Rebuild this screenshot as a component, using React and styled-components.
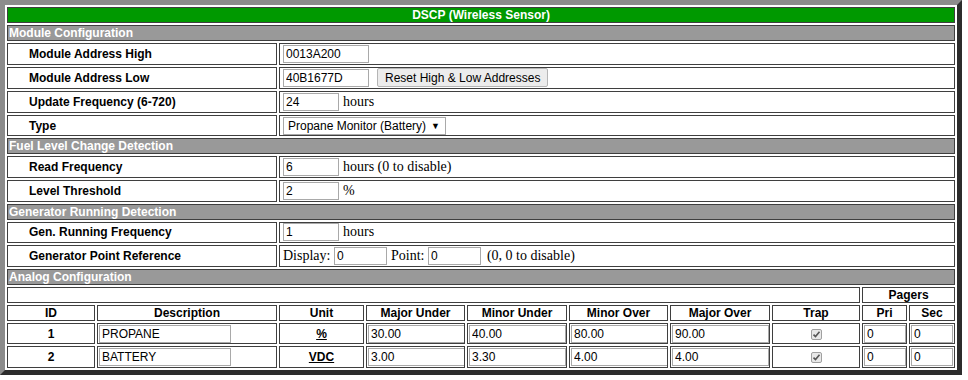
import React from "react";
import styled, { createGlobalStyle } from "styled-components";

const GlobalStyle = createGlobalStyle`
  body {
    margin: 0;
    background: #ffffff;
    font-family: "Liberation Serif", "Times New Roman", serif;
  }
`;

const Table = styled.table`
  width: 962px;
  table-layout: fixed;
  border-collapse: separate;
  border-spacing: 2px;
  border: 5px solid;
  border-color: #8c8c8c #2c2c2c #2c2c2c #8c8c8c;
  font-family: "Liberation Sans", Arial, sans-serif;
  font-size: 12px;
  color: #000;
`;

const Cell = styled.td`
  border: 1px solid #3f3f3f;
  padding: 0.8px 3px;
  vertical-align: middle;
  white-space: nowrap;
  overflow: hidden;
  height: 18px;
  box-sizing: content-box;
`;

const HeaderBase = styled(Cell)`
  font-weight: bold;
  height: 14px;
  padding: 0 2px;
  line-height: 14px;
`;

const TitleCell = styled(HeaderBase)`
  background: #009900;
  color: #fff;
  text-align: center;
`;

const SectionCell = styled(HeaderBase)`
  background: #999999;
  color: #fff;
  padding: 0 1px;
`;

const HeadCell = styled(HeaderBase)`
  text-align: center;
`;

const LabelCell = styled(Cell)`
  font-weight: bold;
  padding-left: 21px;
`;

const ValueCell = styled(Cell)`
  font-family: "Liberation Serif", "Times New Roman", serif;
  font-size: 14px;
`;

const DataCell = styled(Cell)`
  padding-left: 1px;
  padding-right: 1px;
  text-align: ${(p) => (p.$center ? "center" : "left")};
  font-weight: ${(p) => (p.$bold ? "bold" : "normal")};
`;

const Input = styled.input`
  box-sizing: border-box;
  width: ${(p) => p.$w || "86px"};
  height: 18px;
  border: 1px solid #a9a9a9;
  padding: 0 2px;
  margin: 0 4px 0 0;
  font-family: "Liberation Sans", Arial, sans-serif;
  font-size: 12px;
  color: #000;
  vertical-align: middle;
  background: #fff;
`;

const Button = styled.button`
  height: 19px;
  padding: 0 7px;
  margin-left: 4px;
  border: 1px solid #b5b5b5;
  border-radius: 2px;
  background: #ececec;
  font-family: "Liberation Sans", Arial, sans-serif;
  font-size: 12px;
  color: #000;
  vertical-align: middle;
`;

const Select = styled.span`
  display: inline-flex;
  align-items: center;
  gap: 5px;
  box-sizing: border-box;
  height: 18px;
  padding: 0 5px 0 4px;
  border: 1px solid #a9a9a9;
  font-family: "Liberation Sans", Arial, sans-serif;
  font-size: 12px;
  vertical-align: middle;
  background: #fff;
`;

const Arrow = styled.span`
  font-size: 9px;
`;

const Note = styled.span`
  vertical-align: middle;
  margin-left: ${(p) => p.$ml || "0"};
`;

const UnitLink = styled.a`
  color: #000;
  font-weight: bold;
  text-decoration: underline;
`;

function Check() {
  return (
    <svg width="11" height="11" viewBox="0 0 11 11" style={{ verticalAlign: "middle" }}>
      <rect x="0.5" y="0.5" width="10" height="10" rx="1.5" fill="#e8e8e8" stroke="#a0a0a0" />
      <path d="M2.5 5.6 L4.5 7.6 L8.5 2.8" fill="none" stroke="#555" strokeWidth="1.6" />
    </svg>
  );
}

const cols = [88, 180, 85, 99, 100, 99, 100, 88, 45, 46];

function SettingRow({ label, children }) {
  return (
    <tr>
      <LabelCell colSpan={2}>{label}</LabelCell>
      <ValueCell colSpan={8}>{children}</ValueCell>
    </tr>
  );
}

function Section({ title }) {
  return (
    <tr>
      <SectionCell colSpan={10}>{title}</SectionCell>
    </tr>
  );
}

const analog = [
  { id: 1, desc: "PROPANE", unit: "%", vals: ["30.00", "40.00", "80.00", "90.00"] },
  { id: 2, desc: "BATTERY", unit: "VDC", vals: ["3.00", "3.30", "4.00", "4.00"] },
];

export default function App() {
  return (
    <>
      <GlobalStyle />
      <Table>
        <colgroup>
          {cols.map((w, i) => (
            <col key={i} style={{ width: w }} />
          ))}
        </colgroup>
        <tbody>
          <tr>
            <TitleCell colSpan={10}>DSCP (Wireless Sensor)</TitleCell>
          </tr>
          <Section title="Module Configuration" />
          <SettingRow label="Module Address High">
            <Input defaultValue="0013A200" />
          </SettingRow>
          <SettingRow label="Module Address Low">
            <Input defaultValue="40B1677D" />
            <Button>Reset High &amp; Low Addresses</Button>
          </SettingRow>
          <SettingRow label="Update Frequency (6-720)">
            <Input $w="56px" defaultValue="24" />
            <Note>hours</Note>
          </SettingRow>
          <SettingRow label="Type">
            <Select>
              Propane Monitor (Battery) <Arrow>▼</Arrow>
            </Select>
          </SettingRow>
          <Section title="Fuel Level Change Detection" />
          <SettingRow label="Read Frequency">
            <Input $w="56px" defaultValue="6" />
            <Note>hours (0 to disable)</Note>
          </SettingRow>
          <SettingRow label="Level Threshold">
            <Input $w="56px" defaultValue="2" />
            <Note>%</Note>
          </SettingRow>
          <Section title="Generator Running Detection" />
          <SettingRow label="Gen. Running Frequency">
            <Input $w="56px" defaultValue="1" />
            <Note>hours</Note>
          </SettingRow>
          <SettingRow label="Generator Point Reference">
            <Note>Display: </Note>
            <Input $w="53px" defaultValue="0" />
            <Note>Point: </Note>
            <Input $w="53px" defaultValue="0" />
            <Note $ml="2px">(0, 0 to disable)</Note>
          </SettingRow>
          <Section title="Analog Configuration" />
          <tr>
            <HeadCell colSpan={8} />
            <HeadCell colSpan={2}>Pagers</HeadCell>
          </tr>
          <tr>
            {["ID", "Description", "Unit", "Major Under", "Minor Under", "Minor Over", "Major Over", "Trap", "Pri", "Sec"].map(
              (h) => (
                <HeadCell key={h}>{h}</HeadCell>
              )
            )}
          </tr>
          {analog.map((r) => (
            <tr key={r.id}>
              <DataCell $center $bold>
                {r.id}
              </DataCell>
              <DataCell>
                <Input $w="132px" defaultValue={r.desc} />
              </DataCell>
              <DataCell $center>
                <UnitLink href="#">{r.unit}</UnitLink>
              </DataCell>
              {r.vals.map((v, i) => (
                <DataCell key={i}>
                  <Input $w="97px" defaultValue={v} />
                </DataCell>
              ))}
              <DataCell $center>
                <Check />
              </DataCell>
              <DataCell>
                <Input $w="42px" defaultValue="0" />
              </DataCell>
              <DataCell>
                <Input $w="42px" defaultValue="0" />
              </DataCell>
            </tr>
          ))}
        </tbody>
      </Table>
    </>
  );
}
